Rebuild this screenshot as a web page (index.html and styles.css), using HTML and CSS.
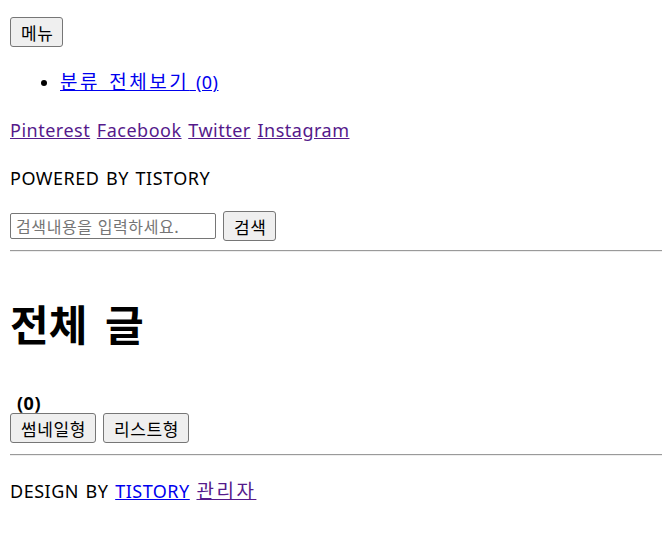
FILE: index.html
```html
<!DOCTYPE html>
<html lang="ko">
<head>
<meta charset="utf-8">
<link rel="stylesheet" href="styles.css">
</head>
<body>
<div class="menu-wrap"><button class="btn">메뉴</button></div>
<ul class="cat">
  <li><a class="link" href="#"><span class="ko">분류 전체보기</span> <span class="cnt">(0)</span></a></li>
</ul>
<p class="social"><a class="visited" href="#">Pinterest</a> <a class="visited" href="#">Facebook</a> <a class="visited" href="#">Twitter</a> <a class="visited" href="#">Instagram</a></p>
<p class="powered">POWERED BY TISTORY</p>
<form class="search"><input class="field" type="text" placeholder="검색내용을 입력하세요."><button class="btn" type="button">검색</button></form>
<hr class="rule rule-top">
<h1 class="title">전체 글</h1>
<div class="count">(0)</div>
<div class="views"><button class="btn">썸네일형</button><button class="btn">리스트형</button></div>
<hr class="rule rule-bottom">
<p class="design">DESIGN BY <a class="link" href="#">TISTORY</a> <a class="visited ko" href="#">관리자</a></p>
</body>
</html>
```
FILE: styles.css
```css
html { background: #fff; }
body {
  margin: 10px 0 0 10px;
  font-family: "Noto Sans", "Noto Sans CJK KR", sans-serif;
  font-size: 18px;
  line-height: 28px;
  letter-spacing: 0.5px;
  word-spacing: 1.5px;
  color: #000;
}
.ko {
  font-family: "Noto Sans CJK KR", sans-serif;
  font-size: 19px;
  letter-spacing: 2.5px;
}
.btn {
  font-family: "Noto Sans CJK KR", sans-serif;
  font-size: 17px;
  letter-spacing: 0.6px;
  word-spacing: 0;
  height: 30px;
  padding: 0 9px 0 10px;
  background: #efefef;
  border: 1px solid #767676;
  border-radius: 3px;
  color: #000;
}
.menu-wrap { padding-top: 7px; line-height: 0; }
.cat { margin: 20px 0; padding-left: 50px; list-style: disc; }
.link { color: #0000ee; }
.visited { color: #551a8b; }
.social { margin: 20px 0; }
.powered { margin: 18px 0 19px; }
.search { display: flex; align-items: center; gap: 7px; margin: 0; }
.field {
  width: 206px;
  height: 26px;
  box-sizing: border-box;
  font-family: "Noto Sans CJK KR", sans-serif;
  font-size: 16px;
  letter-spacing: 0.6px;
  border: 1px solid #767676;
  border-radius: 2px;
  padding: 0 5px;
}
.field::placeholder { color: #757575; }
.rule { margin: 0; border: 0; border-top: 1px solid #9a9a9a; border-bottom: 1px solid #eee; }
.rule-top { margin-top: 9px; }
.rule-bottom { margin-top: 11px; }
.title {
  font-family: "Noto Sans CJK KR", sans-serif;
  font-size: 42px;
  line-height: 50px;
  letter-spacing: 0;
  word-spacing: 6px;
  margin: 46px 0 45px;
  font-weight: 700;
}
.count { font-weight: 700; font-size: 18px; line-height: 20px; padding-left: 7px; }
.views { display: flex; gap: 7px; }
.design { margin: 20px 0; }
```
